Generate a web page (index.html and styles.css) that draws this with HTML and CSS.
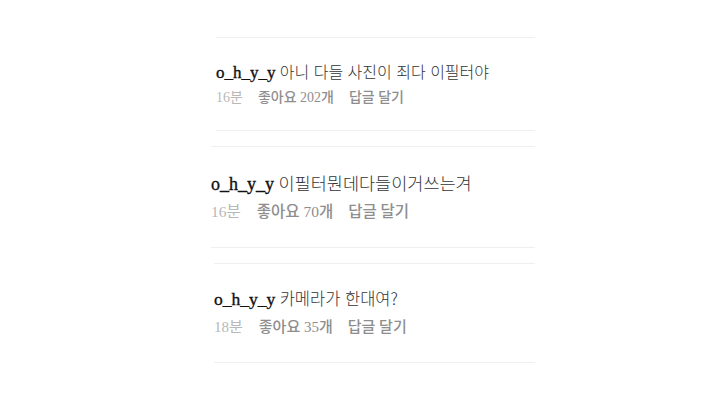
FILE: index.html
```html
<!DOCTYPE html>
<html lang="ko">
<head>
<meta charset="utf-8">
<link rel="stylesheet" href="styles.css">
</head>
<body>
<main class="feed">
  <section class="comment c1">
    <p class="line"><span class="user">o_h_y_y</span> <span class="text">아니 다들 사진이 죄다 이필터야</span></p>
    <p class="meta"><span class="time">16분</span><span class="likes">좋아요 202개</span><span class="reply">답글 달기</span></p>
  </section>
  <section class="comment c2">
    <p class="line"><span class="user">o_h_y_y</span> <span class="text">이필터뭔데다들이거쓰는겨</span></p>
    <p class="meta"><span class="time">16분</span><span class="likes">좋아요 70개</span><span class="reply">답글 달기</span></p>
  </section>
  <section class="comment c3">
    <p class="line"><span class="user">o_h_y_y</span> <span class="text">카메라가 한대여?</span></p>
    <p class="meta"><span class="time">18분</span><span class="likes">좋아요 35개</span><span class="reply">답글 달기</span></p>
  </section>
</main>
</body>
</html>
```
FILE: styles.css
```css
html, body {
  margin: 0;
  padding: 0;
  background: #ffffff;
}
.feed {
  display: flex;
  flex-direction: column;
  gap: 15px;
  padding-top: 37px;
}
.comment {
  width: 319px;
  border-top: 1px solid #efefef;
  border-bottom: 1px solid #efefef;
  display: flex;
  flex-direction: column;
}
.line, .meta {
  margin: 0;
  white-space: nowrap;
}
.line {
  height: 22px;
  line-height: 22px;
  font-family: "Liberation Serif", "Noto Sans CJK KR", serif;
  font-size: 17px;
  color: #1a1a1a;
}
.user {
  font-weight: normal;
  color: #111111;
  -webkit-text-stroke: 0.35px #111111;
}
.text {
  font-family: "Noto Sans CJK KR", sans-serif;
  font-size: 16px;
  font-weight: 300;
  color: #333333;
}
.meta {
  height: 18px;
  line-height: 18px;
  display: flex;
  gap: 15px;
  font-family: "Liberation Serif", "Noto Sans CJK KR", serif;
  font-size: 14px;
}
.time {
  color: #b8b8b8;
}
.likes, .reply {
  color: #8e8e8e;
  font-weight: 500;
}

.c1 { margin-left: 216px; padding: 22px 0 23px; gap: 7px; }

.c2 { margin-left: 211px; width: 324px; padding: 25px 0 26px; gap: 9px; }
.c2 .line { font-size: 18px; }
.c2 .text { font-size: 17.5px; }
.c2 .meta { font-size: 15.5px; gap: 15px; }
.c2 .time { margin-right: 1px; }

.c3 { margin-left: 214px; width: 321px; padding: 23px 0 26px; gap: 9px; }
.c3 .line { font-size: 17.5px; }
.c3 .text { font-size: 16.5px; }
.c3 .meta { font-size: 15px; gap: 15px; }
.c3 .time { margin-right: 1px; }
```
